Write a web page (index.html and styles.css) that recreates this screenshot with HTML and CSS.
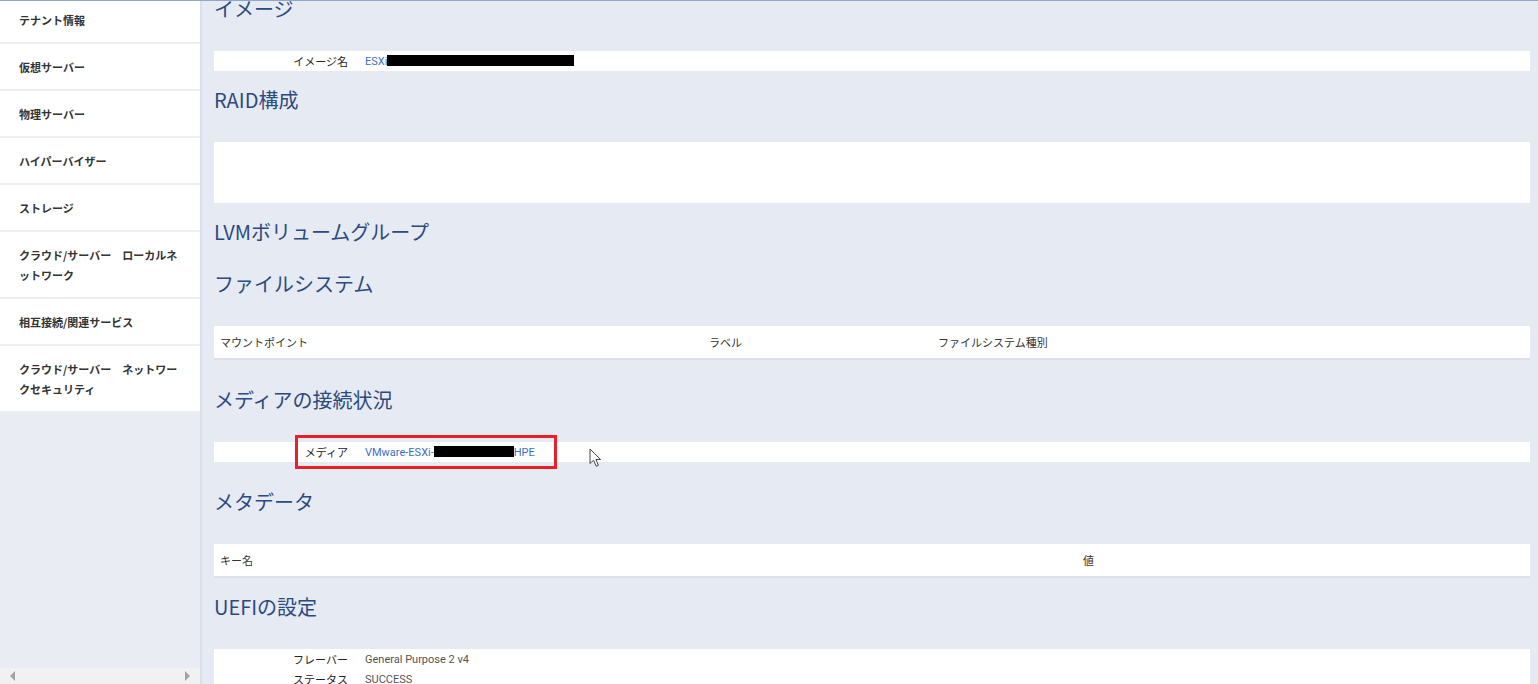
FILE: index.html
```html
<!DOCTYPE html>
<html lang="ja">
<head>
  <meta charset="UTF-8">
  <meta name="viewport" content="width=device-width, initial-scale=1.0">
  <title>サーバー詳細</title>
  <link rel="stylesheet" href="styles.css">
</head>
<body>
  <div class="app">
    <nav class="sidebar">
      <ul class="menu">
        <li>テナント情報</li>
        <li>仮想サーバー</li>
        <li>物理サーバー</li>
        <li>ハイパーバイザー</li>
        <li>ストレージ</li>
        <li>クラウド/サーバー　ローカルネットワーク</li>
        <li>相互接続/関連サービス</li>
        <li>クラウド/サーバー　ネットワークセキュリティ</li>
      </ul>
      <div class="hscroll">
        <span class="arrow arrow-left"></span>
        <span class="arrow arrow-right"></span>
      </div>
    </nav>

    <main class="main">
      <div class="content">
        <section class="section">
          <h2>イメージ</h2>
          <div class="panel">
            <div class="kv-row">
              <span class="kv-label">イメージ名</span>
              <span class="kv-value link">ESXi<span class="redact redact-image"></span></span>
            </div>
          </div>
        </section>

        <section class="section">
          <h2>RAID構成</h2>
          <div class="panel panel-empty"></div>
        </section>

        <section class="section section-bare">
          <h2>LVMボリュームグループ</h2>
        </section>

        <section class="section section-loose">
          <h2>ファイルシステム</h2>
          <div class="panel table-head fs-cols">
            <span>マウントポイント</span>
            <span>ラベル</span>
            <span>ファイルシステム種別</span>
          </div>
        </section>

        <section class="section section-loose">
          <h2>メディアの接続状況</h2>
          <div class="panel media-panel">
            <div class="kv-row">
              <span class="kv-label">メディア</span>
              <span class="kv-value link">VMware-ESXi-<span class="redact redact-media"></span>HPE</span>
            </div>
            <div class="highlight"></div>
            <svg class="cursor" width="13" height="20" viewBox="0 0 13 20">
              <path d="M1 1 L1 15.5 L4.6 12.3 L7.2 18.3 L9.4 17.3 L6.9 11.5 L11.6 11.5 Z" fill="#fff" stroke="#444" stroke-width="1" stroke-linejoin="round"/>
            </svg>
          </div>
        </section>

        <section class="section">
          <h2>メタデータ</h2>
          <div class="panel table-head meta-cols">
            <span>キー名</span>
            <span>値</span>
          </div>
        </section>

        <section class="section">
          <h2>UEFIの設定</h2>
          <div class="panel">
            <div class="kv-row">
              <span class="kv-label">フレーバー</span>
              <span class="kv-value">General Purpose 2 v4</span>
            </div>
            <div class="kv-row">
              <span class="kv-label">ステータス</span>
              <span class="kv-value">SUCCESS</span>
            </div>
          </div>
        </section>
      </div>
    </main>
  </div>
</body>
</html>
```

FILE: styles.css
```css
html, body {
  margin: 0;
  padding: 0;
  height: 100%;
  overflow: hidden;
}
body {
  font-family: Roboto, "Noto Sans CJK JP", sans-serif;
  font-size: 11px;
  color: #222;
  background-color: #e6eaf3;
}
.app {
  display: flex;
  height: 100vh;
  box-sizing: border-box;
  border-top: 1px solid #8ea6c9;
}

/* sidebar */
.sidebar {
  width: 200px;
  flex-shrink: 0;
  display: flex;
  flex-direction: column;
  background-color: #e9ecf3;
  overflow: hidden;
}
.menu {
  list-style: none;
  margin: -4px 0 0 0;
  padding: 0;
  flex: 1;
}
.menu li {
  background-color: #fff;
  padding: 13px 16px 12px 19px;
  line-height: 20px;
  font-family: "Noto Sans CJK JP", sans-serif;
  font-weight: bold;
  color: #333;
  border-bottom: 2px solid #eceef3;
}
.hscroll {
  height: 16px;
  background-color: #f1f1f1;
  display: flex;
  justify-content: space-between;
  align-items: center;
  padding: 0 10px;
}
.arrow {
  width: 0;
  height: 0;
  border-top: 5px solid transparent;
  border-bottom: 5px solid transparent;
}
.arrow-left {
  border-right: 5px solid #a3a3a3;
}
.arrow-right {
  border-left: 5px solid #a3a3a3;
}

/* main */
.main {
  flex: 1;
  border-left: 2px solid #dadfe8;
  padding: 0 8px 0 12px;
  overflow: hidden;
}
.content {
  margin-top: -7px;
}
.section {
  margin-bottom: 14px;
}
.section-loose {
  margin-bottom: 25px;
}
.section-bare {
  margin-bottom: 22px;
}
.section-bare h2 {
  margin-bottom: 0;
}
h2 {
  font-family: "Noto Sans CJK JP", sans-serif;
  font-size: 20px;
  font-weight: normal;
  line-height: 30px;
  color: #2b4a80;
  margin: 0 0 27px 0;
}
.panel {
  background-color: #fff;
}
.panel-empty {
  height: 61px;
}
.kv-row {
  display: grid;
  grid-template-columns: 134px 1fr;
  column-gap: 17px;
  height: 20px;
  align-items: center;
}
.kv-label {
  text-align: right;
  font-family: "Noto Sans CJK JP", sans-serif;
  color: #222;
}
.kv-value {
  color: #555;
  white-space: nowrap;
}
.link {
  color: #3a6fc6;
}
.redact {
  display: inline-block;
  background-color: #000;
  height: 11px;
  vertical-align: -1px;
}
.redact-image {
  width: 187px;
}
.redact-media {
  width: 80px;
}
.table-head {
  display: grid;
  height: 32px;
  align-items: center;
  padding-left: 6px;
  border-bottom: 2px solid #dde0e7;
  font-family: "Noto Sans CJK JP", sans-serif;
  color: #333;
}
.fs-cols {
  grid-template-columns: 489px 229px 1fr;
}
.meta-cols {
  grid-template-columns: 863px 1fr;
}

/* screenshot annotations */
.media-panel {
  position: relative;
}
.highlight {
  position: absolute;
  left: 81px;
  top: -7px;
  width: 256px;
  height: 28px;
  border: 3px solid #e8202a;
}
.cursor {
  position: absolute;
  left: 375px;
  top: 6px;
}
```
